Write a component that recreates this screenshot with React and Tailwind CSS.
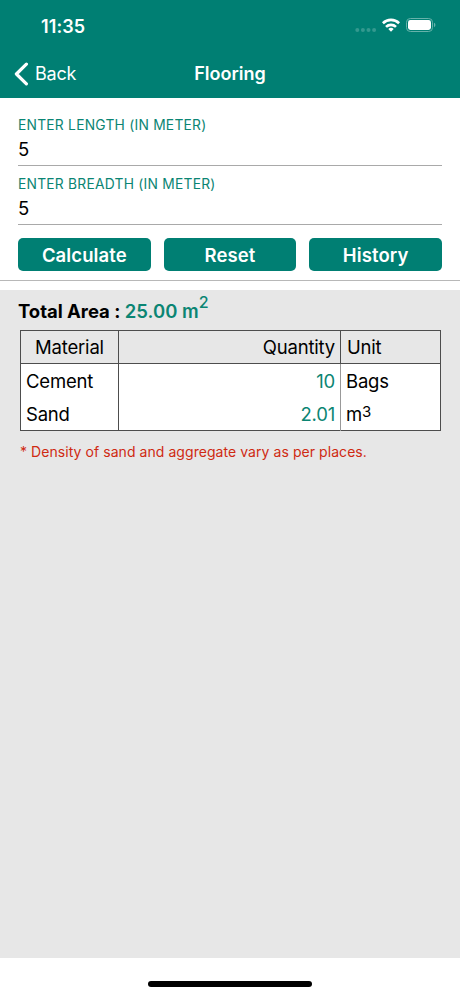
import { useState } from 'react'

const StatusBar = () => {
    return (
        <div className="flex h-[50px] items-center justify-between pl-[41px] pr-[24px] pt-[2px]">
            <span className="text-[18px] font-semibold tracking-[0.1px]">11:35</span>

            <div className="flex items-center">
                <svg width="22" height="6" viewBox="0 0 22 6" className="mt-[8px]" fill="#33998f">
                    <circle cx="2.3" cy="3" r="2" />
                    <circle cx="7.9" cy="3" r="2" />
                    <circle cx="13.5" cy="3" r="2" />
                    <circle cx="19.1" cy="3" r="2" />
                </svg>
                <svg width="18" height="14" viewBox="0 0 18 14" className="-mt-[2px] ml-[5px]" fill="none" stroke="#fff" strokeWidth="2.6">
                    <path d="M0.9 5.2a11.6 11.6 0 0 1 16.2 0" />
                    <path d="M4 8.9a7.1 7.1 0 0 1 10 0" />
                    <path d="M9 13.8L6.3 11.1a3.8 3.8 0 0 1 5.4 0z" fill="#fff" stroke="none" />
                </svg>
                <svg width="30" height="14" viewBox="0 0 30 14" className="-mt-[2px] ml-[6px]">
                    <rect x="0.5" y="0.5" width="26" height="13" rx="3.8" fill="none" stroke="#66b2aa" />
                    <rect x="2" y="2" width="23" height="10" rx="2.4" fill="#fff" />
                    <path d="M28 4.8v4.4a2.4 2.4 0 0 0 0-4.4z" fill="#66b2aa" />
                </svg>
            </div>
        </div>
    )
}

const Field = ({ label, value, onChange }) => {
    return (
        <label className="block h-[59px] border-b border-[#a9a9a9]">
            <span className="block h-[18px] pt-[9px] text-[13.8px] leading-[18px] tracking-[0.24px] text-[#0b8573]">{label}</span>
            <input
                value={value}
                onChange={(e) => onChange(e.target.value)}
                className="mt-[12px] block h-[24px] w-full bg-transparent text-[18.5px] leading-[24px] text-black outline-none"
            />
        </label>
    )
}

const App = () => {

    const [length, setLength] = useState("5");
    const [breadth, setBreadth] = useState("5");

    const buttons = ["Calculate", "Reset", "History"];

    return (
        <div className="flex h-[996px] w-[460px] flex-col overflow-hidden bg-white font-['Inter',sans-serif] text-black">

            <header className="h-[98px] bg-[#007f73] text-white">
                <StatusBar />
                <div className="grid h-[47px] grid-cols-3 items-center">
                    <button className="flex items-center pl-[14px]">
                        <svg width="15" height="24" viewBox="0 0 15 24" fill="none" stroke="#fff" strokeWidth="3.2" strokeLinecap="round" strokeLinejoin="round">
                            <path d="M12.4 2.2L2.4 12l10 9.8" />
                        </svg>
                        <span className="ml-[6px] text-[18px] tracking-[-0.2px]">Back</span>
                    </button>
                    <h1 className="text-center text-[18px] font-semibold">Flooring</h1>
                </div>
            </header>

            <section className="h-[183px] border-b-[1.5px] border-[#b8b8b8] px-[18px] pt-[9px]">
                <Field label="ENTER LENGTH (IN METER)" value={length} onChange={setLength} />
                <Field label="ENTER BREADTH (IN METER)" value={breadth} onChange={setBreadth} />
                <div className="mt-[13px] grid grid-cols-3 gap-[13px]">
                    {buttons.map((name) => (
                        <button key={name} className="h-[33px] rounded-[5px] bg-[#007f73] pt-[2px] text-[18.5px] font-semibold tracking-[0.1px] text-white">
                            {name}
                        </button>
                    ))}
                </div>
            </section>

            <main className="mt-[9px] h-[668px] bg-[#e7e7e7] pl-[20px] pr-[19px]">
                <p className="-ml-[2px] h-[40px] whitespace-nowrap pt-[9px] text-[18.5px] font-bold leading-[24px] tracking-[-0.03px]">
                    Total Area : <span className="font-semibold tracking-[0.05px] text-[#0b8573]">25.00 m<sup className="-top-[10px] text-[16px] font-medium leading-none">2</sup></span>
                </p>

                <table className="w-[421px] table-fixed border-collapse border border-[#4d4d4d] text-[18.5px] leading-[24px] tracking-[-0.2px]">
                    <colgroup>
                        <col className="w-[98px]" />
                        <col className="w-[222px]" />
                        <col />
                    </colgroup>
                    <thead>
                        <tr className="h-[33px] border-b border-[#4d4d4d]">
                            <th className="border-r border-[#4d4d4d] p-0 font-normal">Material</th>
                            <th className="border-r border-[#4d4d4d] p-0 pr-[5px] text-right font-normal">Quantity</th>
                            <th className="p-0 pl-[6px] text-left font-normal">Unit</th>
                        </tr>
                    </thead>
                    <tbody className="bg-white">
                        <tr className="h-[34px]">
                            <td className="border-r border-[#4d4d4d] p-0 pl-[5px]">Cement</td>
                            <td className="border-r border-[#999] p-0 pr-[5px] text-right text-[#0b8573]">10</td>
                            <td className="p-0 pl-[5px]">Bags</td>
                        </tr>
                        <tr className="h-[33px]">
                            <td className="border-r border-[#4d4d4d] p-0 pl-[5px]">Sand</td>
                            <td className="border-r border-[#999] p-0 pr-[5px] text-right text-[#0b8573]">2.01</td>
                            <td className="p-0 pl-[5px]">m<sup className="-top-[4px] text-[15px] leading-none">3</sup></td>
                        </tr>
                    </tbody>
                </table>

                <p className="mt-[11px] whitespace-nowrap text-[14px] leading-[20px] tracking-[0.06px] text-[#cf2a12]">
                    * Density of sand and aggregate vary as per places.
                </p>
            </main>

            <footer className="flex h-[38px] justify-center pt-[23px]">
                <div className="h-[6px] w-[164px] rounded-full bg-black" />
            </footer>
        </div>
    )
}

export default App;
